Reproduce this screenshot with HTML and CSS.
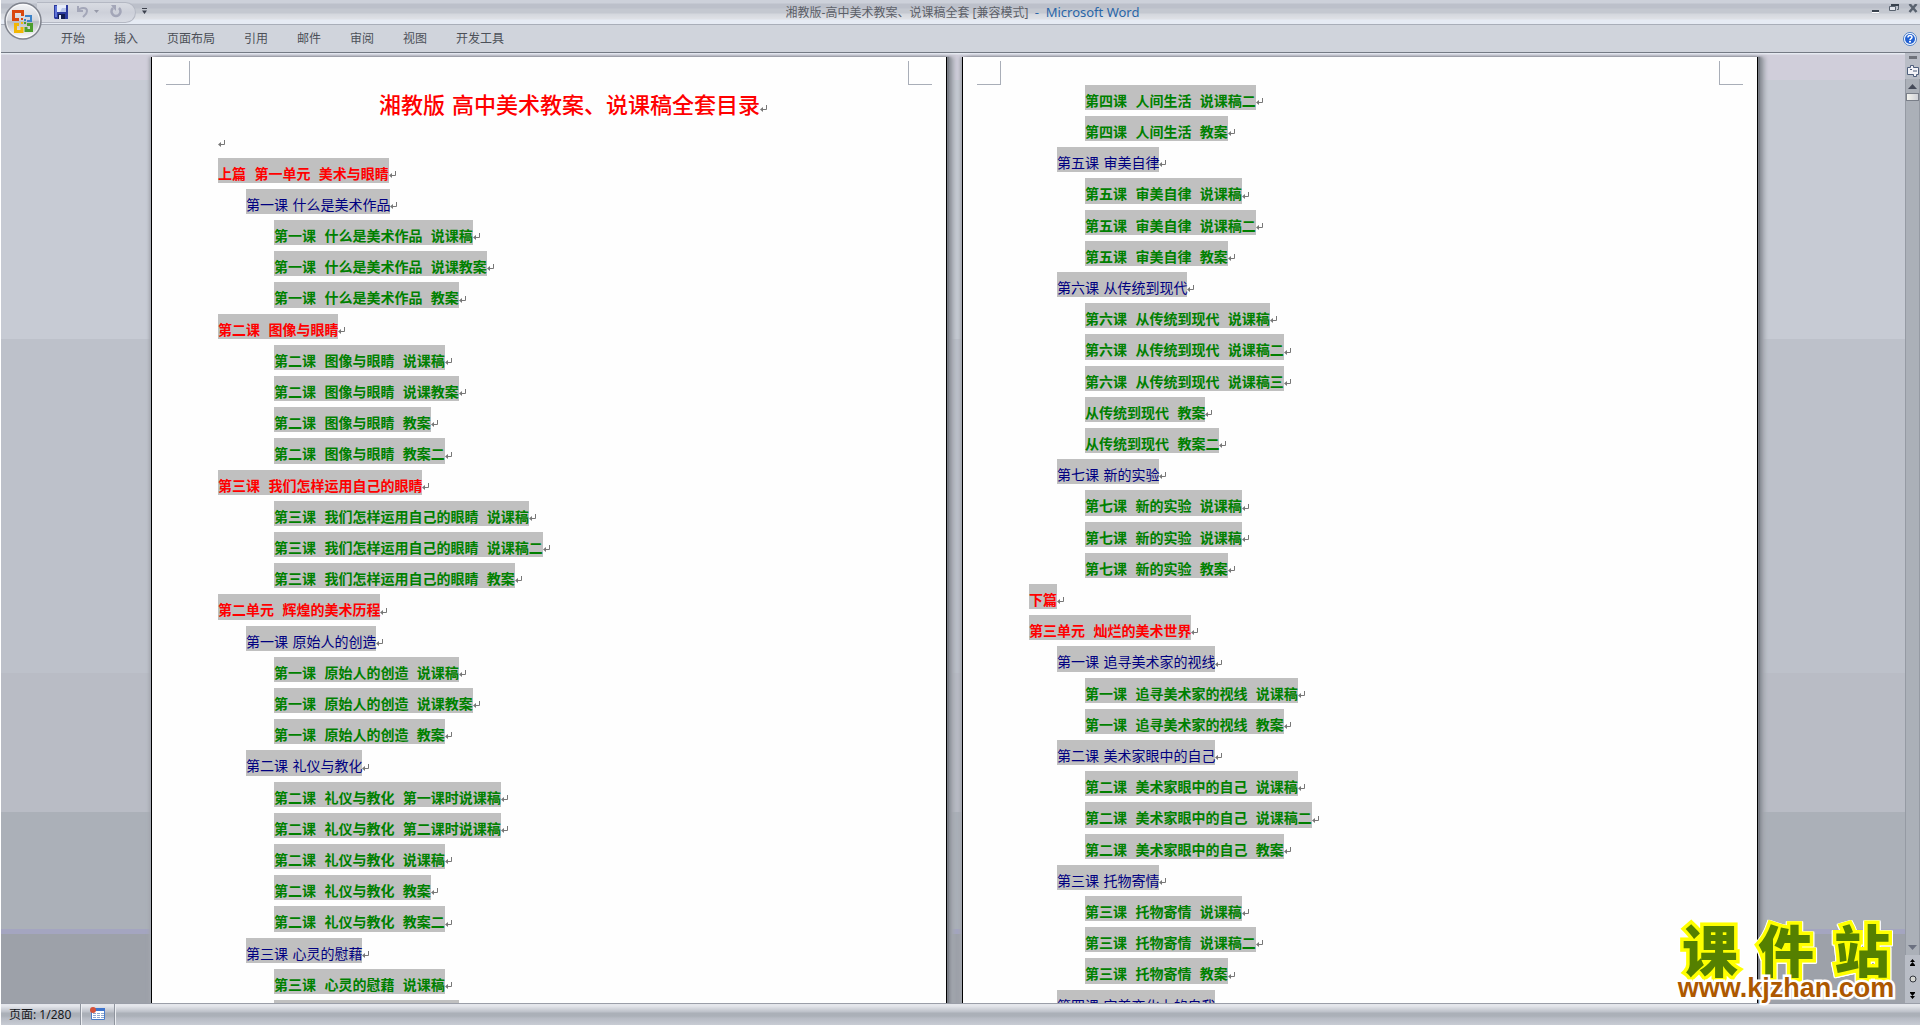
FILE: index.html
```html
<!DOCTYPE html>
<html lang="zh-CN">
<head>
<meta charset="utf-8">
<title>湘教版-高中美术教案、说课稿全套 - Microsoft Word</title>
<link rel="stylesheet" href="styles.css">
</head>
<body>
<div class="window">
  <header class="titlebar">
    <div class="quick-access">
      <button class="icon-btn" aria-label="保存"><svg width="14" height="14" viewBox="0 0 14 14"><path fill="#2b3a9e" d="M0 0h14v14H1L0 13z"/><path fill="#5f74d8" d="M1 1h2v11H1z"/><path fill="#e6ecfa" d="M3 0h9v7H3z"/><path fill="#b9c6ea" d="M8 3h4v4H6z"/><path fill="#111c50" d="M4 9h7v5H4z"/><path fill="#e6ecfa" d="M5 10h2v4H5z"/></svg></button>
      <button class="icon-btn undo" aria-label="撤消"><svg width="13" height="13" viewBox="0 0 13 13"><path fill="none" stroke="#a3a6b8" stroke-width="2" d="M2 1v5h5M2 6c2-4 9-4 9 0 0 3-2 4-4 6"/></svg></button>
      <button class="icon-btn arrow" aria-label="撤消列表"><svg width="5" height="3" viewBox="0 0 5 3"><path fill="#9699a8" d="M0 0h5L2.500 3z"/></svg></button>
      <button class="icon-btn redo" aria-label="重复"><svg width="12" height="13" viewBox="0 0 12 13"><path fill="none" stroke="#a3a6b8" stroke-width="2.500" d="M3 3c-3 3-1 8 3 8s6-5 3-8"/><path fill="#a3a6b8" d="M1 0h5v6L4 4z"/></svg></button>
    </div>
    <button class="icon-btn customize" aria-label="自定义快速访问工具栏"><svg width="5" height="6" viewBox="0 0 5 6"><path fill="#3d424e" d="M0 0h5v1H0zM0 2.500h5L2.500 6z"/></svg></button>
    <h1 class="caption">湘教版-高中美术教案、说课稿全套 [兼容模式] &nbsp;<span class="app-name">- &nbsp;Microsoft Word</span></h1>
    <div class="window-buttons">
      <button class="icon-btn" aria-label="最小化"><svg width="8" height="9" viewBox="0 0 8 9"><path fill="#39424e" d="M0 6h7v2H0z"/><path fill="#fff" d="M0 8h7v1H0z"/></svg></button>
      <button class="icon-btn" aria-label="还原"><svg width="10" height="9" viewBox="0 0 10 9"><path fill="none" stroke="#59626f" d="M2.500 2V.5h7v5H8"/><path fill="#e2e5ec" stroke="#59626f" d="M.5 2.500h6v4h-6z"/><path fill="#39424e" d="M2 0h8v2H2z"/></svg></button>
      <button class="icon-btn" aria-label="关闭"><svg width="10" height="9" viewBox="0 0 10 9"><path stroke="#59626f" stroke-width="2.500" d="M1.500 0l7 8M8.500 0l-7 8"/></svg></button>
    </div>
  </header>
  <nav class="tabs">
    <button class="tab">开始</button>
    <button class="tab">插入</button>
    <button class="tab">页面布局</button>
    <button class="tab">引用</button>
    <button class="tab">邮件</button>
    <button class="tab">审阅</button>
    <button class="tab">视图</button>
    <button class="tab">开发工具</button>
    <button class="icon-btn help" aria-label="帮助"><svg width="14" height="14" viewBox="0 0 14 14"><circle cx="7" cy="7" r="6.500" fill="#fff" stroke="#4b7cc4"/><circle cx="7" cy="7" r="5" fill="#2160d2"/><path fill="none" stroke="#fff" stroke-width="1.500" d="M5 5.500C5 3 9 3 9 5.200 9 6.700 7 6.500 7 8.300"/><path fill="#fff" d="M6 9h2v1.500H6z"/></svg></button>
  </nav>
  <button class="office-button" aria-label="Office 按钮"><svg width="38" height="38" viewBox="0 0 38 38"><defs><linearGradient id="orb" x1="0" y1="0" x2="0" y2="1"><stop offset="0" stop-color="#f4f5f8"/><stop offset=".48" stop-color="#d3d5db"/><stop offset=".52" stop-color="#b9bcc4"/><stop offset="1" stop-color="#fff"/></linearGradient></defs><circle cx="19" cy="19" r="18" fill="url(#orb)" stroke="#80848e" stroke-width="1.500"/><circle cx="19" cy="19" r="16.500" fill="none" stroke="#fff" stroke-opacity=".7"/><g fill="none" stroke-width="3"><path stroke="#d9480f" d="M15 17.500H9.500v-8h9V14"/><path stroke="#3c82c8" stroke-width="2" d="M21 14h6v5h-4"/><path stroke="#f2b705" d="M15 22.500h-3.500v7H18V25"/><path stroke="#4c9e2d" d="M23 22.500h4.500v6H22V25"/></g><path fill="#d9480f" d="M17 16h2v2h-2z"/><path fill="#3c82c8" d="M20 17h2v2h-2z"/><path fill="#f2b705" d="M17 20h2v2h-2z"/><path fill="#4c9e2d" d="M20 20h2v2h-2z"/></svg></button>

  <div class="workspace">
    <main class="desk">
      <article class="page">
        <i class="crop crop-left"></i><i class="crop crop-right"></i>
        <h2 class="doc-title mark">湘教版 高中美术教案、说课稿全套目录</h2>
        <p class="blank mark"></p>
        <ul class="toc first">
          <li class="part mark"><span>上篇 第一单元 美术与眼睛</span></li>
          <li class="lesson mark"><span>第一课 什么是美术作品</span></li>
          <li class="item mark"><span>第一课 什么是美术作品 说课稿</span></li>
          <li class="item mark"><span>第一课 什么是美术作品 说课教案</span></li>
          <li class="item mark"><span>第一课 什么是美术作品 教案</span></li>
          <li class="part mark"><span>第二课 图像与眼睛</span></li>
          <li class="item mark"><span>第二课 图像与眼睛 说课稿</span></li>
          <li class="item mark"><span>第二课 图像与眼睛 说课教案</span></li>
          <li class="item mark"><span>第二课 图像与眼睛 教案</span></li>
          <li class="item mark"><span>第二课 图像与眼睛 教案二</span></li>
          <li class="part mark"><span>第三课 我们怎样运用自己的眼睛</span></li>
          <li class="item mark"><span>第三课 我们怎样运用自己的眼睛 说课稿</span></li>
          <li class="item mark"><span>第三课 我们怎样运用自己的眼睛 说课稿二</span></li>
          <li class="item mark"><span>第三课 我们怎样运用自己的眼睛 教案</span></li>
          <li class="part mark"><span>第二单元 辉煌的美术历程</span></li>
          <li class="lesson mark"><span>第一课 原始人的创造</span></li>
          <li class="item mark"><span>第一课 原始人的创造 说课稿</span></li>
          <li class="item mark"><span>第一课 原始人的创造 说课教案</span></li>
          <li class="item mark"><span>第一课 原始人的创造 教案</span></li>
          <li class="lesson mark"><span>第二课 礼仪与教化</span></li>
          <li class="item mark"><span>第二课 礼仪与教化 第一课时说课稿</span></li>
          <li class="item mark"><span>第二课 礼仪与教化 第二课时说课稿</span></li>
          <li class="item mark"><span>第二课 礼仪与教化 说课稿</span></li>
          <li class="item mark"><span>第二课 礼仪与教化 教案</span></li>
          <li class="item mark"><span>第二课 礼仪与教化 教案二</span></li>
          <li class="lesson mark"><span>第三课 心灵的慰藉</span></li>
          <li class="item mark"><span>第三课 心灵的慰藉 说课稿</span></li>
          <li class="item mark"><span>第三课 心灵的慰藉 说课稿二</span></li>
        </ul>
      </article>
      <article class="page">
        <i class="crop crop-left"></i><i class="crop crop-right"></i>
        <ul class="toc second">
          <li class="item mark"><span>第四课 人间生活 说课稿二</span></li>
          <li class="item mark"><span>第四课 人间生活 教案</span></li>
          <li class="lesson mark"><span>第五课 审美自律</span></li>
          <li class="item mark"><span>第五课 审美自律 说课稿</span></li>
          <li class="item mark"><span>第五课 审美自律 说课稿二</span></li>
          <li class="item mark"><span>第五课 审美自律 教案</span></li>
          <li class="lesson mark"><span>第六课 从传统到现代</span></li>
          <li class="item mark"><span>第六课 从传统到现代 说课稿</span></li>
          <li class="item mark"><span>第六课 从传统到现代 说课稿二</span></li>
          <li class="item mark"><span>第六课 从传统到现代 说课稿三</span></li>
          <li class="item mark"><span>从传统到现代 教案</span></li>
          <li class="item mark"><span>从传统到现代 教案二</span></li>
          <li class="lesson mark"><span>第七课 新的实验</span></li>
          <li class="item mark"><span>第七课 新的实验 说课稿</span></li>
          <li class="item mark"><span>第七课 新的实验 说课稿</span></li>
          <li class="item mark"><span>第七课 新的实验 教案</span></li>
          <li class="part mark"><span>下篇</span></li>
          <li class="part mark"><span>第三单元 灿烂的美术世界</span></li>
          <li class="lesson mark"><span>第一课 追寻美术家的视线</span></li>
          <li class="item mark"><span>第一课 追寻美术家的视线 说课稿</span></li>
          <li class="item mark"><span>第一课 追寻美术家的视线 教案</span></li>
          <li class="lesson mark"><span>第二课 美术家眼中的自己</span></li>
          <li class="item mark"><span>第二课 美术家眼中的自己 说课稿</span></li>
          <li class="item mark"><span>第二课 美术家眼中的自己 说课稿二</span></li>
          <li class="item mark"><span>第二课 美术家眼中的自己 教案</span></li>
          <li class="lesson mark"><span>第三课 托物寄情</span></li>
          <li class="item mark"><span>第三课 托物寄情 说课稿</span></li>
          <li class="item mark"><span>第三课 托物寄情 说课稿二</span></li>
          <li class="item mark"><span>第三课 托物寄情 教案</span></li>
          <li class="lesson mark"><span>第四课 完美变化上的自我</span></li>
        </ul>
      </article>
    </main>
    <aside class="scroll">
      <div class="split-handle"></div>
      <button class="icon-btn ruler" aria-label="标尺"><svg width="12" height="12" viewBox="0 0 12 12"><path fill="#f3f3f8" stroke="#4f5f7c" d="M.5 2.500h3v-2h3v2h5v7h-2v2h-3v-2h-6z"/><path fill="none" stroke="#4f5f7c" d="M3 4.500h2M7 5v2M9 5v2"/></svg></button>
      <div class="track">
        <button class="icon-btn up" aria-label="向上滚动"><svg width="9" height="5" viewBox="0 0 9 5"><path fill="#454a58" d="M0 5h9L4.500 0z"/></svg></button>
        <div class="thumb"></div>
        <button class="icon-btn down" aria-label="向下滚动"><svg width="9" height="5" viewBox="0 0 9 5"><path fill="#6b7080" d="M0 0h9L4.500 5z"/></svg></button>
      </div>
      <div class="browse">
        <button class="icon-btn" aria-label="前一页"><svg width="5" height="7" viewBox="0 0 5 7"><path fill="#000" d="M0 3h5L2.500 0zM0 6h5L2.500 3zM0 6h5v1H0z"/></svg></button>
        <button class="icon-btn" aria-label="选择浏览对象"><svg width="8" height="8" viewBox="0 0 8 8"><circle cx="4" cy="4" r="3" fill="#d5d6d2" stroke="#33363e"/></svg></button>
        <button class="icon-btn" aria-label="下一页"><svg width="5" height="7" viewBox="0 0 5 7"><path fill="#000" d="M0 0h5v1H0zM0 1h5L2.500 4zM0 4h5L2.500 7z"/></svg></button>
      </div>
    </aside>
  </div>

  <footer class="status">
    <button class="status-cell pages">页面: 1/280</button>
    <button class="status-cell macro" aria-label="录制宏"><svg width="15" height="13" viewBox="0 0 15 13"><path fill="#fff" stroke="#4a7cc8" d="M1.500 1.500h13v11h-13z"/><path fill="#3f74cc" d="M2 1h13v3H2z"/><path stroke="#8fa8d0" stroke-dasharray="3 1" d="M3 6.500h11M3 8.500h11M3 10.500h11"/><circle cx="3" cy="3" r="3" fill="#d4513a"/></svg></button>
  </footer>

  <div class="watermark">
    <div class="wm-name"><span>课</span><span>件</span><span>站</span></div>
    <div class="wm-url">www.kjzhan.com</div>
  </div>
</div>
</body>
</html>
```
FILE: styles.css
```css
* { box-sizing: border-box; }

body {
  margin: 0;
  background: #d0d4dc;
  font-family: "Noto Sans", "Noto Sans CJK SC", sans-serif;
  font-size: 12px;
}

.window {
  position: relative;
  display: flex;
  flex-direction: column;
  height: 100vh;
  overflow: hidden;
  border-left: 1px solid #fff;
}

.icon-btn {
  display: flex;
  align-items: center;
  justify-content: center;
  padding: 0;
  border: 0;
  background: none;
}

/* Title bar */
.titlebar {
  display: flex;
  flex: none;
  align-items: flex-start;
  height: 25px;
  padding: 2px 2px 0 36px;
  border-bottom: 1px solid #a9aeb9;
  background: linear-gradient(#cdd1da 0 3px, #bcc0ca 4px 8px, #c4c8d0 9px 13px, #d4d7dd 14px, #dfe1e6 19px, #e6ebf4 20px);
}

.quick-access {
  display: flex;
  align-items: center;
  height: 21px;
  width: 99px;
  padding-left: 17px;
  border: 1px solid #b4b8c3;
  border-left: 0;
  border-radius: 0 11px 11px 0;
  background: linear-gradient(#d8dbe2, #cdd0d9 50%, #d9dce4);
}

.quick-access .icon-btn { height: 14px; margin-bottom: 2px; }
.undo { margin-left: 8px; }
.arrow { margin-left: 5px; }
.redo { margin-left: 11px; }
.customize { height: 18px; margin-left: 6px; }

.caption {
  flex: 1;
  margin: 0;
  padding-right: 94px;
  font-size: 12px;
  font-weight: 400;
  line-height: 21px;
  text-align: center;
  color: #5c6068;
}

.app-name {
  font-family: "Noto Sans", sans-serif;
  font-size: 13px;
  color: #2a66a8;
}

.window-buttons {
  display: flex;
  gap: 9px;
  padding-top: 2px;
}

/* Ribbon tabs */
.tabs {
  display: flex;
  flex: none;
  align-items: center;
  height: 28px;
  padding: 0 3px 0 46px;
  border-bottom: 1px solid #747a84;
  background: #d0d4dc;
}

.tab {
  padding: 0 15px 0 14px;
  border: 0;
  background: none;
  font: 12px/24px "Noto Sans", "Noto Sans CJK SC", sans-serif;
  color: #4c5058;
}

.help { margin-left: auto; }

.office-button {
  position: absolute;
  top: 2px;
  left: 3px;
  padding: 0;
  border: 0;
  background: none;
  line-height: 0;
}

/* Document area */
.workspace {
  display: flex;
  flex: 1;
  min-height: 0;
  background: linear-gradient(#e6eaf1 0 1px, #d0ceda 2px 27px, #c7cbd4 27px 286px, #bdc1ca 286px 620px, #b9bcc5 620px 759px, #abb0b8 759px 876px, #a4a5c0 876px 881px, #9da1a9 881px);
}

.desk {
  display: flex;
  flex: 1;
  justify-content: center;
  gap: 15px;
  padding: 4px 0 0 3px;
  overflow: hidden;
}

.page {
  position: relative;
  flex: none;
  width: 796px;
  height: 1123px;
  border: 1px solid #000;
  border-top: 0;
  background: #fefefe;
  box-shadow: 2px 0 1px #7a7e86, 4px 0 2px #8f939b, 7px 0 4px #a2a6ae, -2px 0 3px #a2a6ae;
}

.crop {
  position: absolute;
  top: 4px;
  width: 24px;
  height: 24px;
  border-bottom: 1px solid #a9aeb8;
}
.crop-left { left: 14px; border-right: 1px solid #a9aeb8; }
.crop-right { right: 14px; border-left: 1px solid #a9aeb8; }

.mark::after {
  content: "";
  width: 7px;
  height: 8px;
  margin-bottom: 4px;
  background: url('data:image/svg+xml,<svg xmlns="http://www.w3.org/2000/svg" width="7" height="8"><path d="M6.500 0v4.500H1" fill="none" stroke="%23777"/><path d="M3 2v5L0 4.500z" fill="%23777"/></svg>');
}

.doc-title {
  display: flex;
  align-items: flex-end;
  justify-content: center;
  margin: 0;
  padding: 33px 0 0 48px;
  font: 500 22px/32px "DejaVu Sans", "Noto Sans CJK SC", sans-serif;
  color: #f00;
}
.doc-title.mark::after { margin-bottom: 9px; }

.blank {
  display: flex;
  height: 30px;
  margin: 0;
  padding: 18px 0 0 66px;
}

.toc {
  margin: 0;
  padding: 6px 0 0 66px;
  list-style: none;
}
.toc.second { padding-top: 28px; }

.toc li {
  display: flex;
  align-items: flex-end;
  height: 25px;
  margin-bottom: 6px;
  font-size: 14px;
  line-height: 17px;
  white-space: nowrap;
}

.toc.first li:nth-child(5n),
.toc.second li:nth-child(5n - 1) { height: 26px; }

.toc span {
  height: 100%;
  padding-top: 8px;
  background: #c0c0c0;
}

.part, .item {
  font-family: "Liberation Mono", "Noto Sans CJK SC", sans-serif;
  font-weight: 700;
}
.toc .part span,
.toc .item span { padding-top: 9px; }

.part { color: #f00; }
.lesson {
  padding-left: 28px;
  font-family: "DejaVu Sans", "Noto Sans CJK SC", sans-serif;
  color: #000080;
}
.item { padding-left: 56px; color: #008000; }

/* Scroll bar */
.scroll {
  display: flex;
  flex: none;
  flex-direction: column;
  align-items: stretch;
  width: 15px;
  padding-top: 3px;
  background: #b9bdc6;
}

.split-handle {
  flex: none;
  width: 8px;
  height: 3px;
  margin: 0 auto 3px;
  background: #6e727a;
}

.ruler { height: 17px; }

.track {
  display: flex;
  flex: 1;
  flex-direction: column;
  border: 1px solid #959aa3;
  border-width: 0 1px;
  background: #abb0b8;
}

.up { height: 14px; }
.thumb {
  height: 8px;
  border: 1px solid #7a7f89;
  background: linear-gradient(90deg, #f4f4ee, #d0d2d8);
}
.down { height: 16px; margin-top: auto; }

.browse {
  display: flex;
  flex-direction: column;
  align-items: center;
  justify-content: space-around;
  height: 48px;
}

/* Status bar */
.status {
  display: flex;
  flex: none;
  height: 22px;
  border-top: 1px solid #9a9ea8;
  background: linear-gradient(#e4e6eb 0 2px, #cfd2d9 5px, #bcc0c8 8px, #abb0b8 9px 12px, #b6bac3 14px, #c8ccd4 21px);
}

.status-cell {
  border: 0;
  border-right: 1px solid #8f949e;
  background: none;
  box-shadow: 1px 0 #eceef2;
  font: 12px/20px "Noto Sans", "Noto Sans CJK SC", sans-serif;
  color: #16181c;
}
.pages { padding: 0 9px 0 8px; }
.macro { padding: 2px 9px 0; }

/* Site stamp over the document */
.watermark {
  position: absolute;
  right: 20px;
  bottom: 23px;
  width: 228px;
}

.wm-name {
  display: flex;
  justify-content: space-around;
  font: 900 56px/52px "Noto Sans CJK SC", sans-serif;
  color: #558000;
  -webkit-text-stroke: 7px #ff0;
  paint-order: stroke fill;
  filter: drop-shadow(1px 0 #fff) drop-shadow(-1px 0 #fff) drop-shadow(0 1px #fff);
}

.wm-url {
  position: relative;
  font: 700 27px/28px "Liberation Sans", sans-serif;
  text-align: center;
  color: #ad5800;
  -webkit-text-stroke: 5px #fff;
  paint-order: stroke fill;
}
```
